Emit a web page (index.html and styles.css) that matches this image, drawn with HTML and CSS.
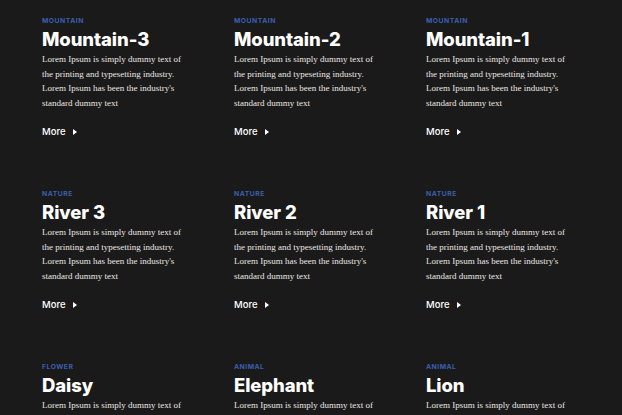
FILE: index.html
```html
<!DOCTYPE html>
<html>
<head>
<meta charset="utf-8">
<link rel="stylesheet" href="styles.css">
</head>
<body>
<div class="grid">
  <div class="card">
    <div class="cat">Mountain</div>
    <h2 class="title">Mountain-3</h2>
    <p class="text">Lorem Ipsum is simply dummy text of the printing and typesetting industry. Lorem Ipsum has been the industry's standard dummy text</p>
    <a class="more">More <span class="tri"></span></a>
  </div>
  <div class="card">
    <div class="cat">Mountain</div>
    <h2 class="title">Mountain-2</h2>
    <p class="text">Lorem Ipsum is simply dummy text of the printing and typeseting industry. Lorem Ipsum has been the industry's standard dummy text</p>
    <a class="more">More <span class="tri"></span></a>
  </div>
  <div class="card">
    <div class="cat">Mountain</div>
    <h2 class="title">Mountain-1</h2>
    <p class="text">Lorem Ipsum is simply dummy text of the printing and typesetting industry. Lorem Ipsum has been the industry's standard dummy text</p>
    <a class="more">More <span class="tri"></span></a>
  </div>
  <div class="card">
    <div class="cat">Nature</div>
    <h2 class="title">River 3</h2>
    <p class="text">Lorem Ipsum is simply dummy text of the printing and typesetting industry. Lorem Ipsum has been the industry's standard dummy text</p>
    <a class="more">More <span class="tri"></span></a>
  </div>
  <div class="card">
    <div class="cat">Nature</div>
    <h2 class="title">River 2</h2>
    <p class="text">Lorem Ipsum is simply dummy text of the printing and typesetting industry. Lorem Ipsum has been the industry's standard dummy text</p>
    <a class="more">More <span class="tri"></span></a>
  </div>
  <div class="card">
    <div class="cat">Nature</div>
    <h2 class="title">River 1</h2>
    <p class="text">Lorem Ipsum is simply dummy text of the printing and typesetting industry. Lorem Ipsum has been the industry's standard dummy text</p>
    <a class="more">More <span class="tri"></span></a>
  </div>
  <div class="card">
    <div class="cat">Flower</div>
    <h2 class="title">Daisy</h2>
    <p class="text">Lorem Ipsum is simply dummy text of the printing and typesetting industry. Lorem Ipsum has been the industry's standard dummy text</p>
    <a class="more">More <span class="tri"></span></a>
  </div>
  <div class="card">
    <div class="cat">Animal</div>
    <h2 class="title">Elephant</h2>
    <p class="text">Lorem Ipsum is simply dummy text of the printing and typesetting industry. Lorem Ipsum has been the industry's standard dummy text</p>
    <a class="more">More <span class="tri"></span></a>
  </div>
  <div class="card">
    <div class="cat">Animal</div>
    <h2 class="title">Lion</h2>
    <p class="text">Lorem Ipsum is simply dummy text of the printing and typesetting industry. Lorem Ipsum has been the industry's standard dummy text</p>
    <a class="more">More <span class="tri"></span></a>
  </div>
</div>
</body>
</html>
```
FILE: styles.css
```css
html, body {
  margin: 0;
  padding: 0;
  background: #1a1a1a;
  overflow: hidden;
}
.grid {
  display: grid;
  grid-template-columns: repeat(3, 192px);
  grid-auto-rows: 173px;
  padding: 16px 0 0 42px;
}
.card {
  width: 150px;
}
.cat {
  font-family: "Inter", "Lato", sans-serif;
  font-weight: 700;
  font-size: 6.8px;
  letter-spacing: 0.5px;
  text-transform: uppercase;
  color: #3a5fae;
  line-height: 10px;
}
.title {
  font-family: "Inter", "Lato", sans-serif;
  font-weight: 800;
  font-size: 18.5px;
  line-height: 24px;
  margin: 1px 0 1px;
  color: #ffffff;
  letter-spacing: -0.1px;
}
.text {
  font-family: "Liberation Serif", serif;
  font-size: 9px;
  line-height: 14.5px;
  color: #ece8e4;
  margin: 0;
}
.more {
  display: inline-flex;
  align-items: center;
  gap: 8px;
  margin-top: 16px;
  font-family: "Inter", "Lato", sans-serif;
  font-weight: 500;
  font-size: 9.5px;
  color: #ffffff;
}
.tri {
  width: 0;
  height: 0;
  border-left: 4px solid #fff;
  border-top: 3.5px solid transparent;
  border-bottom: 3.5px solid transparent;
}
```
